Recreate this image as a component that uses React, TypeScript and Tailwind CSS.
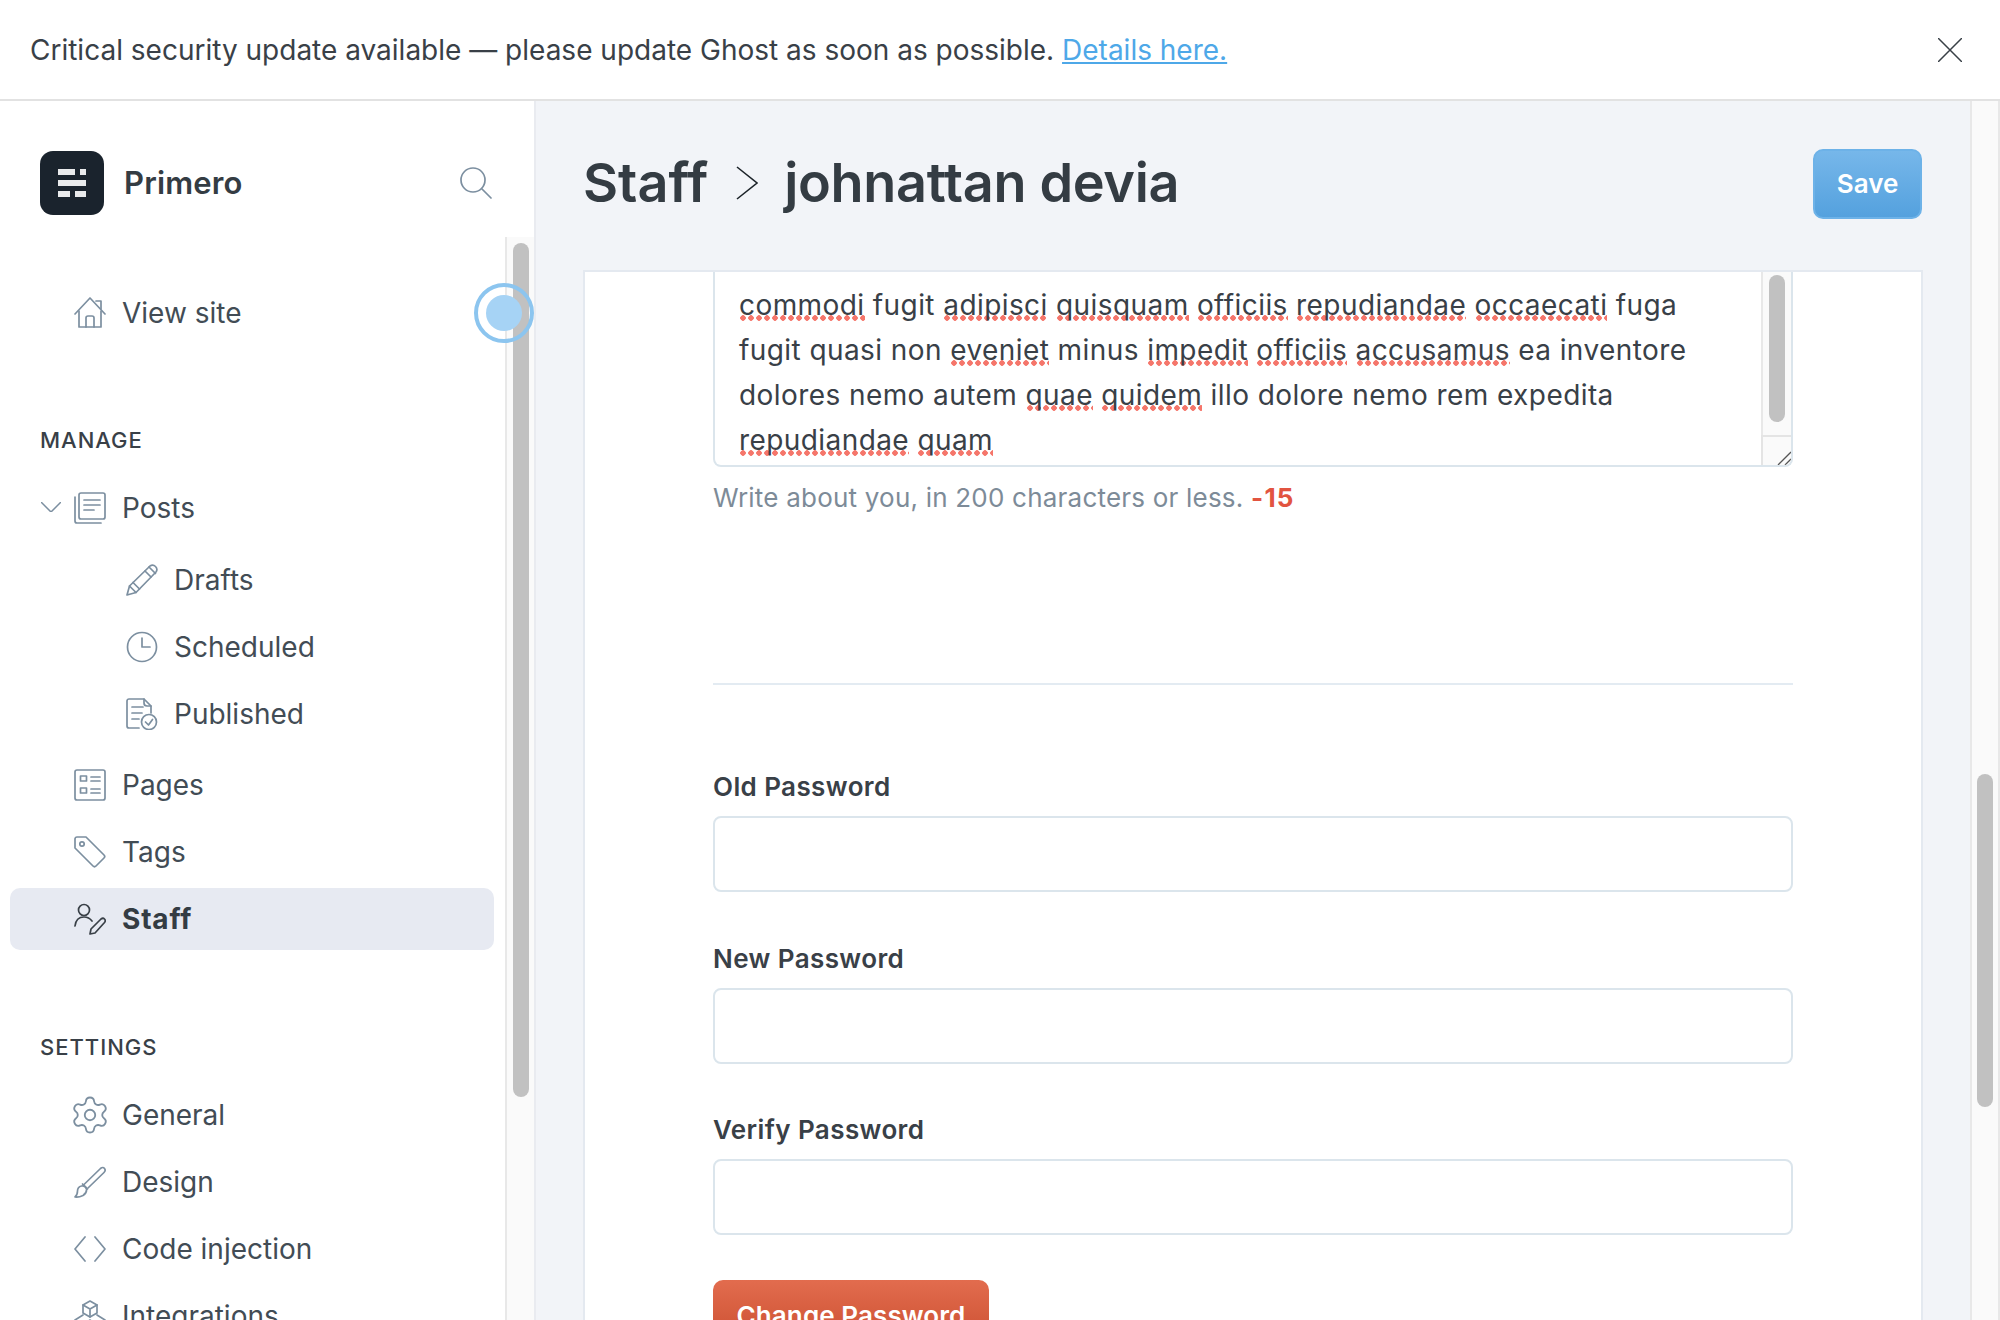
import React from "react";
import { Settings } from "lucide-react";

const Ico = ({ children }: { children: React.ReactNode }) => (
  <svg viewBox="0 0 32 32" fill="none" stroke="#7c8fa0" strokeWidth="1.7" strokeLinecap="round" strokeLinejoin="round" className="w-8 h-8 shrink-0">
    {children}
  </svg>
);

const Home = () => <Ico><path d="M1 17 16 1l15 16" /><path d="M22 4h5v8" /><path d="M5 14v16h22V14" /><path d="M12 30v-9q0-2 2-2h4q2 0 2 2v9" /></Ico>;
const Posts = () => <Ico><rect x="5" y="1" width="26" height="26" rx="2" /><path d="M10 8h16M10 13h16M10 18h10" /><path d="M1 5v24a2 2 0 0 0 2 2h24" /></Ico>;
const Pencil = () => <Ico><path d="M1 31 3.5 22 24 2q3-2 5.5.5T30 8L10 28.5Z" /><path d="M3.5 22 10 28.5M7 18.500l6.500 6.500M23 3l6.500 6.500" /><path d="M19 7l6 6" /></Ico>;
const Clock = () => <Ico><circle cx="16" cy="16" r="14.500" /><path d="M16 7v9h8" /></Ico>;
const Published = () => <Ico><path d="M13 30H3a2 2 0 0 1-2-2V3a2 2 0 0 1 2-2h15l7 7v7" /><path d="M18 1v4q0 3 3 3h4" /><path d="M6 9h11M6 15h10M6 21h7" /><circle cx="23" cy="24" r="7.500" /><path d="m19.500 24 3 3 4-5.500" /></Ico>;
const Pages = () => <Ico><rect x="1" y="1" width="30" height="30" rx="2" /><rect x="6.500" y="7" width="6" height="5" /><rect x="6.500" y="19" width="6" height="5" /><path d="M17 8h9M17 12h9M17 20h9M17 24h9" /></Ico>;
const Tags = () => <Ico><path d="M1 3a2 2 0 0 1 2-2h9l18 18q1.500 1.500 0 3l-8 8q-1.500 1.500-3 0L1 12Z" /><circle cx="8" cy="8" r="2.200" /></Ico>;
const Staff = () => (
  <svg viewBox="0 0 32 32" fill="none" stroke="#394047" strokeWidth="1.7" strokeLinecap="round" strokeLinejoin="round" className="w-8 h-8 shrink-0">
    <circle cx="10" cy="7" r="5.500" />
    <path d="M1 23q1-9 9-9 5 0 8 4" />
    <path d="M16 31l1-5L27 16q2-1.500 3.500 0t0 3.500L21 30Z" />
  </svg>
);
const Brush = () => <Ico><path d="M1 31q2.500-2 2.500-6 0-4 4-5t5 3q.5 4-3.500 6.500-4 2-8 1.500Z" /><path d="M10 18.500 26.500 2.500q2.500-2 4 0t-.5 4L14 22" /><path d="m8.500 18 5 5" /></Ico>;
const Code = () => <Ico><path d="M11 4 1 16l10 12M21 4l10 12-10 12" /></Ico>;
const Cubes = () => <Ico><path d="M16 1l7 4v8l-7 4-7-4V5Z" /><path d="M9 5l7 4 7-4M16 9v8" /><path d="M9 15 1 20l8 5 7-5 7 5 8-5-8-5" /></Ico>;

const Row = ({ icon, label, bold = false, sub = false }: { icon: React.ReactNode; label: string; bold?: boolean; sub?: boolean }) => (
  <div className={`h-[62px] flex items-center mb-[5px] rounded-[10px] ml-[10px] w-[484px] ${bold ? "bg-[#e7eaf2]" : ""} ${sub ? "pl-[116px]" : "pl-[64px]"}`}>
    {icon}
    <span className={`ml-4 text-[28px] ${bold ? "font-bold tracking-[0.8px] text-[#343c43]" : "text-[#424c55]"}`}>{label}</span>
  </div>
);

const Sp = ({ children }: { children: React.ReactNode }) => (
  <span className="bg-[radial-gradient(circle,#f5766b_2.500px,transparent_3px)] bg-[length:8px_6px] bg-repeat-x bg-[position:0_calc(100%-1px)]">{children}</span>
);

const TextLine = ({ children }: { children: React.ReactNode }) => <div className="h-[45px] leading-[45px] whitespace-nowrap">{children}</div>;

const Field = ({ label, mb = "mb-[51.5px]" }: { label: string; mb?: string }) => (
  <div className={mb}>
    <div className="h-[30px] leading-[30px] text-[26px] font-semibold text-[#394047] tracking-[0.4px]">{label}</div>
    <div className="mt-[14px] h-[76px] border-2 border-[#dbe5ec] rounded-[8px] bg-white" />
  </div>
);

const Track = ({ className = "", children }: { className?: string; children?: React.ReactNode }) => (
  <div className={`bg-[#fafafa] border-l-2 border-[#e8e8e8] flex flex-col items-center ${className}`}>{children}</div>
);

export default function App() {
  return (
    <div className="w-[2000px] h-[1320px] overflow-hidden flex flex-col bg-white text-[#394047] font-['Inter','Liberation_Sans',sans-serif]">
      <header className="h-[101px] shrink-0 border-b-2 border-[#e2e2e2] flex items-center pl-[30px] pr-[38px]">
        <p className="text-[28px] text-[#394047] flex-1 whitespace-nowrap">
          Critical security update available — please update Ghost as soon as possible.{" "}
          <a className="text-[#4ea8e8] underline">Details here.</a>
        </p>
        <svg viewBox="0 0 24 24" className="w-6 h-6" stroke="#394047" strokeWidth="1.5" fill="none"><path d="M0 0l24 24M24 0 0 24" /></svg>
      </header>

      <div className="flex-1 min-h-0 flex">
        <aside className="w-[536px] shrink-0 border-r-2 border-[#e9ebf0] flex flex-col bg-white">
          <div className="h-[136px] shrink-0 flex items-center pl-10 pr-[42px] pt-[28px]">
            <svg viewBox="0 0 64 64" className="w-16 h-16 shrink-0">
              <rect width="64" height="64" rx="13" fill="#1a232d" />
              <g fill="#e9eaec">
                <rect x="18" y="18" width="17" height="6" />
                <rect x="40" y="18" width="6" height="6" />
                <rect x="18" y="29" width="28" height="6" />
                <rect x="18" y="40" width="12" height="6" />
                <rect x="35" y="40" width="11" height="6" />
              </g>
            </svg>
            <span className="ml-5 text-[31px] font-semibold tracking-[0.15px] text-[#343c43] flex-1">Primero</span>
            <svg viewBox="0 0 32 32" fill="none" stroke="#7c8fa0" strokeWidth="1.700" strokeLinecap="round" className="w-8 h-8 shrink-0">
              <circle cx="13" cy="13" r="12" />
              <path d="m22 22 9 9" />
            </svg>
          </div>
          <div className="flex-1 min-h-0 flex relative">
            <nav className="flex-1 min-w-0 overflow-hidden pt-[45px]">
              <Row icon={<Home />} label="View site" />
              <div className="mt-[81px] mb-[22px] h-[30px] leading-[30px] pl-[40px] text-[22px] font-medium tracking-[1px] text-[#394047]">MANAGE</div>
              <div className="relative">
                <svg viewBox="0 0 20 10" fill="none" stroke="#7c8fa0" strokeWidth="1.500" className="absolute left-[41px] top-[25px] w-5 h-[10px]"><path d="M0 0l10 10L20 0" /></svg>
                <Row icon={<Posts />} label="Posts" />
              </div>
              <div className="mt-[10px] mb-[9px]">
                <Row icon={<Pencil />} label="Drafts" sub />
                <Row icon={<Clock />} label="Scheduled" sub />
                <Row icon={<Published />} label="Published" sub />
              </div>
              <Row icon={<Pages />} label="Pages" />
              <Row icon={<Tags />} label="Tags" />
              <Row icon={<Staff />} label="Staff" bold />
              <div className="mt-[82px] mb-[22px] h-[30px] leading-[30px] pl-[40px] text-[22px] font-medium tracking-[1px] text-[#394047]">SETTINGS</div>
              <Row icon={<Settings size={42} color="#7c8fa0" strokeWidth={1.05} className="shrink-0 -m-[5px]" />} label="General" />
              <Row icon={<Brush />} label="Design" />
              <Row icon={<Code />} label="Code injection" />
              <Row icon={<Cubes />} label="Integrations" />
            </nav>
            <Track className="w-[29px] pt-[6px]">
              <div className="w-4 h-[854px] rounded-lg bg-[#c1c1c1]" />
            </Track>
            <div className="absolute left-[474px] top-[46px] w-[60px] h-[60px] rounded-full border-4 border-[#8cc5ef] flex items-center justify-center">
              <div className="w-9 h-9 rounded-full bg-[#a6d3f5]" />
            </div>
          </div>
        </aside>

        <main className="flex-1 min-w-0 bg-[#f2f4f8] flex">
          <div className="flex-1 min-w-0 pl-[47px] pr-[47px] flex flex-col">
            <div className="h-[169px] shrink-0 flex items-center pb-[6px]">
              <h1 className="text-[54px] font-semibold text-[#343c43] flex items-center flex-1 whitespace-nowrap">
                Staff
                <svg viewBox="0 0 22 34" fill="none" stroke="#1c2329" strokeWidth="1.600" className="w-[22px] h-[34px] ml-[28px] mr-[26px]"><path d="M1 1l20 16L1 33" /></svg>
                <span className="tracking-[-0.33px]">johnattan devia</span>
              </h1>
              <button className="w-[109px] h-[70px] mr-px mt-[2px] rounded-[10px] bg-gradient-to-b from-[#76b7ea] to-[#54a1de] border-2 border-[#6db2e8] text-white font-semibold text-[26px]">Save</button>
            </div>
            <section className="flex-1 min-h-0 overflow-hidden bg-white border-2 border-b-0 border-[#e4e9f0] pl-[128px] pr-[128px]">
              <div className="h-[195px] border-2 border-t-0 border-[#dbe5ec] rounded-b-[8px] flex overflow-hidden">
                <div className="flex-1 min-w-0 pl-[24px] pt-[11px] text-[28px] text-[#394047] tracking-[0.42px]">
                  <TextLine><Sp>commodi</Sp> fugit <Sp>adipisci</Sp> <Sp>quisquam</Sp> <Sp>officiis</Sp> <Sp>repudiandae</Sp> <Sp>occaecati</Sp> fuga</TextLine>
                  <TextLine>fugit quasi non <Sp>eveniet</Sp> minus <Sp>impedit</Sp> <Sp>officiis</Sp> <Sp>accusamus</Sp> ea inventore</TextLine>
                  <TextLine>dolores nemo autem <Sp>quae</Sp> <Sp>quidem</Sp> illo dolore nemo rem expedita</TextLine>
                  <TextLine><Sp>repudiandae</Sp> <Sp>quam</Sp></TextLine>
                </div>
                <div className="w-[30px] shrink-0 flex flex-col">
                  <Track className="flex-1 pt-[3px]">
                    <div className="w-4 h-[147px] rounded-lg bg-[#c1c1c1]" />
                  </Track>
                  <div className="h-[30px] bg-[#fafafa] border-l-2 border-t-2 border-[#e4e4e4] flex items-end justify-end">
                    <svg viewBox="0 0 14 14" fill="none" stroke="#555" strokeWidth="1.300" className="w-[14px] h-[14px]"><path d="M1 14 14 1M8 14l6-6" /></svg>
                  </div>
                </div>
              </div>
              <p className="mt-[15px] h-[32px] leading-[32px] text-[26px] text-[#7d8b98] tracking-[0.21px]">
                Write about you, in 200 characters or less. <span className="text-[#e25440] font-bold tracking-[1.2px]">-15</span>
              </p>
              <hr className="mt-[169px] border-0 h-[2px] bg-[#e3ebf2]" />
              <div className="mt-[87px]">
                <Field label="Old Password" />
                <Field label="New Password" />
                <Field label="Verify Password" mb="mb-[45px]" />
                <button className="w-[276px] h-[70px] rounded-[10px] bg-gradient-to-b from-[#e26c4e] to-[#c94c2d] text-white font-semibold text-[26px] tracking-[0.1px]">Change Password</button>
              </div>
            </section>
          </div>
          <Track className="w-[30px] shrink-0 pt-[673px] border-r-2">
            <div className="w-4 h-[333px] rounded-lg bg-[#c1c1c1]" />
          </Track>
        </main>
      </div>
    </div>
  );
}
